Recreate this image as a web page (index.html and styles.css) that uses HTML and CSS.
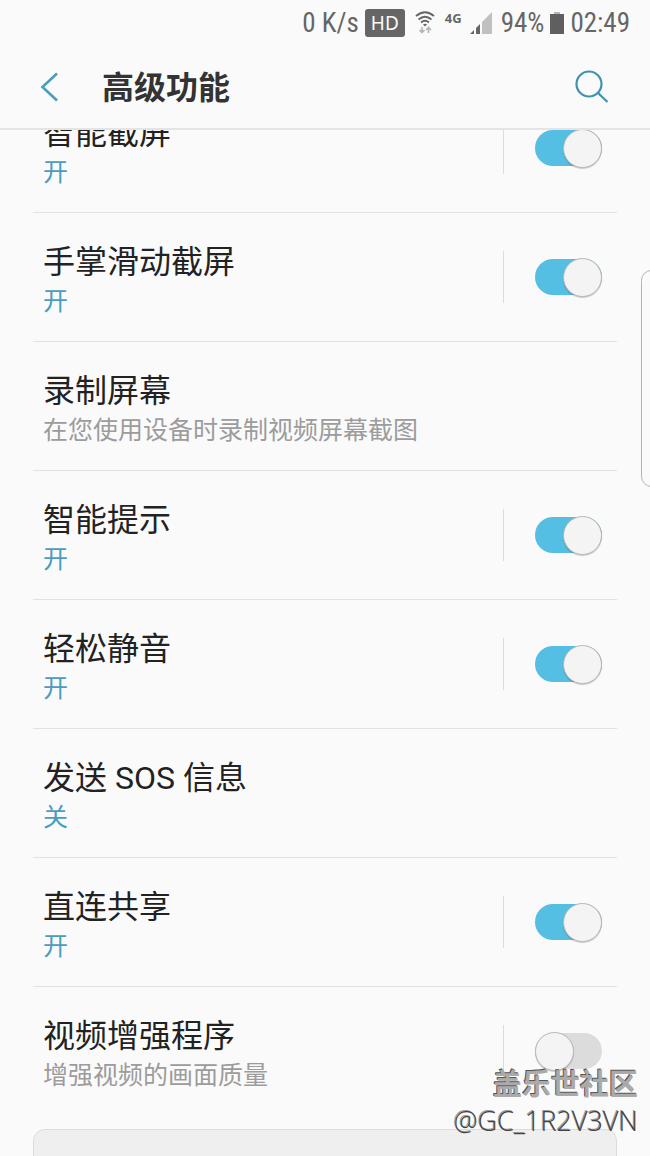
FILE: index.html
```html
<!DOCTYPE html>
<html lang="zh-CN">
<head>
    <meta charset="UTF-8">
    <meta name="viewport" content="width=device-width, initial-scale=1.0">
    <title>高级功能</title>
    <link rel="stylesheet" href="styles.css">
</head>
<body>
    <div class="statusBar">
        <span>0 K/s</span>
        <span class="hd">HD</span>
        <svg class="wifi" width="20" height="24" viewBox="0 0 20 24" fill="none" stroke="#666" stroke-width="1.8">
            <path d="M1 5Q10 -2.500 19 5M3.500 8.500Q10 3 16.500 8.500M6 11.500Q10 8 14 11.500"/>
            <path d="M8 13.500Q10 12 12 13.500L10 15.500Z" fill="#666" stroke="none"/>
            <path d="M7 16v5M4.500 19l2.500 2.500 2.500-2.500M13.500 22v-5M11 19l2.500-2.500 2.500 2.500" stroke="#b5b5b5" stroke-width="1.6"/>
        </svg>
        <span class="network">4G</span>
        <svg class="signal" width="23" height="23" viewBox="0 0 23 23">
            <path d="M0 22L4 18V22Z" fill="#666"/>
            <path d="M6 16L10 12V22H6Z" fill="#666"/>
            <path d="M12 10L22 0V22H12Z" fill="#c0c0c0"/>
        </svg>
        <span>94%</span>
        <svg class="battery" width="14" height="22" viewBox="0 0 14 22">
            <path d="M4 0H10V3H4Z" fill="#b5b5b5"/>
            <path d="M0 2H14V22H0Z" fill="#5f5f5f"/>
        </svg>
        <span>02:49</span>
    </div>

    <header>
        <button class="iconButton" aria-label="返回">
            <svg width="20" height="30" viewBox="0 0 20 30" fill="none" stroke="#4a9dbb" stroke-width="2.6">
                <path d="M17 1.500L2.500 15L17 28.500"/>
            </svg>
        </button>
        <h1>高级功能</h1>
        <button class="iconButton" aria-label="搜索">
            <svg width="34" height="34" viewBox="0 0 34 34" fill="none" stroke="#4192ae" stroke-width="2.2">
                <circle cx="14" cy="14" r="12.500"/>
                <path d="M23 23L32.500 32"/>
            </svg>
        </button>
    </header>

    <main>
        <ul class="list">
            <li class="row">
                <label class="info" for="smartCapture">
                    <span class="name">智能截屏</span>
                    <span class="state">开</span>
                </label>
                <div class="control"><input class="toggle" type="checkbox" id="smartCapture" checked></div>
            </li>
            <li class="row">
                <label class="info" for="palmSwipe">
                    <span class="name">手掌滑动截屏</span>
                    <span class="state">开</span>
                </label>
                <div class="control"><input class="toggle" type="checkbox" id="palmSwipe" checked></div>
            </li>
            <li class="row">
                <div class="info">
                    <span class="name">录制屏幕</span>
                    <span class="hint">在您使用设备时录制视频屏幕截图</span>
                </div>
            </li>
            <li class="row">
                <label class="info" for="smartAlert">
                    <span class="name">智能提示</span>
                    <span class="state">开</span>
                </label>
                <div class="control"><input class="toggle" type="checkbox" id="smartAlert" checked></div>
            </li>
            <li class="row">
                <label class="info" for="easyMute">
                    <span class="name">轻松静音</span>
                    <span class="state">开</span>
                </label>
                <div class="control"><input class="toggle" type="checkbox" id="easyMute" checked></div>
            </li>
            <li class="row">
                <div class="info">
                    <span class="name">发送 SOS 信息</span>
                    <span class="state">关</span>
                </div>
            </li>
            <li class="row">
                <label class="info" for="directShare">
                    <span class="name">直连共享</span>
                    <span class="state">开</span>
                </label>
                <div class="control"><input class="toggle" type="checkbox" id="directShare" checked></div>
            </li>
            <li class="row">
                <label class="info" for="videoEnhancer">
                    <span class="name">视频增强程序</span>
                    <span class="hint">增强视频的画面质量</span>
                </label>
                <div class="control"><input class="toggle" type="checkbox" id="videoEnhancer"></div>
            </li>
        </ul>
        <section class="card"></section>
    </main>

    <div class="edgeHandle"></div>
    <div class="watermark">
        <div class="community">盖乐世社区</div>
        <div class="user">@GC_1R2V3VN</div>
    </div>
</body>
</html>
```
FILE: styles.css
```css
*,
*::before {
    box-sizing: border-box;
}

body {
    position: relative;
    display: flex;
    flex-direction: column;
    height: 100vh;
    margin: 0;
    overflow: hidden;
    background-color: #fafafa;
    color: #222222;
    font-family: Roboto, "Noto Sans CJK SC", sans-serif;
}

.statusBar {
    display: flex;
    flex-shrink: 0;
    align-items: center;
    justify-content: flex-end;
    height: 46px;
    padding-right: 20px;
    color: #666666;
    font-family: "Roboto Condensed", Roboto, sans-serif;
    font-size: 27px;
}

.hd {
    margin: 0 10px 0 6px;
    padding: 0 6px;
    border-radius: 3px;
    background-color: #666666;
    color: #fafafa;
    font-family: "Noto Sans", sans-serif;
    font-size: 19px;
    line-height: 28px;
}

.network {
    margin: 0 8px 10px 10px;
    font-family: "Noto Sans", sans-serif;
    font-size: 13px;
    font-weight: bold;
    line-height: 16px;
}

.signal {
    margin-right: 8px;
}

.battery {
    margin: 0 6px;
}

header {
    display: flex;
    flex-shrink: 0;
    align-items: center;
    height: 84px;
    padding: 0 41px 0 40px;
    border-bottom: 2px solid #e4e4e4;
}

h1 {
    flex: 1;
    margin: 0 0 0 42px;
    padding-top: 2px;
    color: #333333;
    font-size: 32px;
    font-weight: bold;
    line-height: 40px;
}

.iconButton {
    display: flex;
    padding: 0;
    border: none;
    background: none;
}

main {
    flex: 1;
    padding: 0 33px;
    overflow: hidden;
}

/* list is scrolled part of the way under the header */
.list {
    margin: -46px 0 0;
    padding: 0;
    list-style: none;
}

.row {
    display: flex;
    align-items: center;
    border-bottom: 1px solid #e2e2e2;
}

.row:last-child {
    border-bottom: none;
}

.info {
    flex: 1;
    padding: 29px 0 19px 10px;
}

.name,
.state,
.hint {
    display: block;
    line-height: 40px;
}

.name {
    font-size: 32px;
}

.state,
.hint {
    font-size: 25px;
}

.state {
    color: #4a9dbc;
}

.hint {
    color: #9c9c9c;
}

.control {
    display: flex;
    align-items: center;
    height: 52px;
    padding: 0 15px 0 31px;
    border-left: 1px solid #dcdcdc;
}

.toggle {
    display: flex;
    align-items: center;
    width: 67px;
    height: 36px;
    margin: 0;
    border-radius: 18px;
    background-color: #dcdcdc;
    appearance: none;
}

.toggle::before {
    content: "";
    width: 39px;
    height: 39px;
    flex-shrink: 0;
    border: 1px solid #b8b8b8;
    border-radius: 50%;
    background-color: #f4f4f4;
    box-shadow: 0 1px 1px rgba(0, 0, 0, 0.2);
}

.toggle:checked {
    justify-content: flex-end;
    background-color: #55bfe3;
}

.card {
    height: 120px;
    margin-top: 14px;
    border: 1px solid #dcdcdc;
    border-radius: 12px;
    background-color: #efefef;
}

.edgeHandle {
    position: absolute;
    top: 270px;
    right: -12px;
    width: 21px;
    height: 217px;
    border: 1px solid #b4b4b4;
    border-radius: 12px;
}

.watermark {
    position: absolute;
    right: 12px;
    bottom: 17px;
    color: #444444;
    text-align: right;
}

.community {
    font-size: 29px;
    font-weight: bold;
    line-height: 36px;
    color: #aaaaaa;
    text-shadow: -1px -1px 0 #555555;
}

.user {
    font-family: "Open Sans", "Noto Sans", sans-serif;
    font-size: 27px;
    font-weight: 300;
    line-height: 36px;
    text-shadow: -1px -1px 0 #999999;
}
```
